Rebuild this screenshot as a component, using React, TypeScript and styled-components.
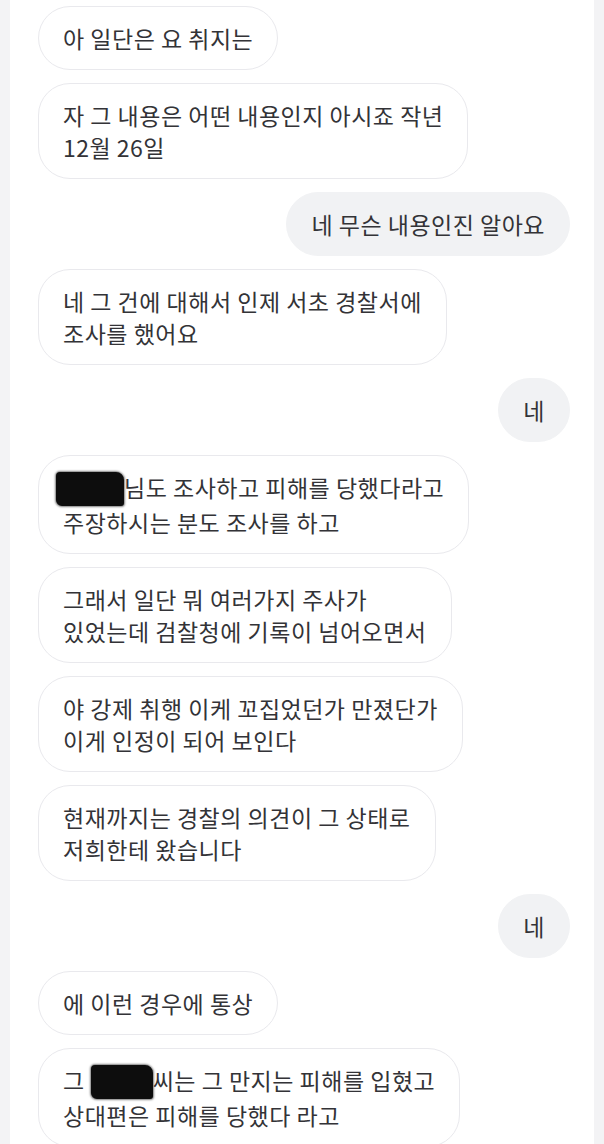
import React from 'react'
import styled, { createGlobalStyle } from 'styled-components'

type Message = {
  mine?: boolean
  lines: React.ReactNode[]
}

function Redacted({ width, shift = 0 }: { width: number; shift?: number }) {
  return <Blot style={{ width, marginLeft: shift }} />
}

const messages: Message[] = [
  { lines: ['아 일단은 요 취지는'] },
  { lines: ['자 그 내용은 어떤 내용인지 아시죠 작년', '12월 26일'] },
  { mine: true, lines: ['네 무슨 내용인진 알아요'] },
  { lines: ['네 그 건에 대해서 인제 서초 경찰서에', '조사를 했어요'] },
  { mine: true, lines: ['네'] },
  {
    lines: [
      <>
        <Redacted width={68} shift={-7} />
        님도 조사하고 피해를 당했다라고
      </>,
      '주장하시는 분도 조사를 하고',
    ],
  },
  { lines: ['그래서 일단 뭐 여러가지 주사가', '있었는데 검찰청에 기록이 넘어오면서'] },
  { lines: ['야 강제 취행 이케 꼬집었던가 만졌단가', '이게 인정이 되어 보인다'] },
  { lines: ['현재까지는 경찰의 의견이 그 상태로', '저희한테 왔습니다'] },
  { mine: true, lines: ['네'] },
  { lines: ['에 이런 경우에 통상'] },
  {
    lines: [
      <>
        그
        <Redacted width={62} shift={6} />
        씨는 그 만지는 피해를 입혔고
      </>,
      '상대편은 피해를 당했다 라고',
    ],
  },
]

export default function App() {
  return (
    <>
      <GlobalStyle />
      <Transcript>
        {messages.map((m, i) => (
          <Bubble key={i} $mine={!!m.mine}>
            {m.lines.map((line, j) => (
              <Line key={j}>{line}</Line>
            ))}
          </Bubble>
        ))}
      </Transcript>
    </>
  )
}

// styles

const GlobalStyle = createGlobalStyle`
  html, body {
    margin: 0;
    padding: 0;
    background: #f3f3f5;
  }
  body {
    font-family: "Noto Sans CJK KR", "Noto Sans", sans-serif;
    color: #333337;
  }
`

const Transcript = styled.main`
  display: flex;
  flex-direction: column;
  gap: 13px;
  margin: 0 10px;
  padding: 6px 24px 0 28px;
  min-height: 100vh;
  box-sizing: border-box;
  background: #ffffff;
`

const Bubble = styled.div<{ $mine: boolean }>`
  align-self: ${(p) => (p.$mine ? 'flex-end' : 'flex-start')};
  display: flex;
  flex-direction: column;
  padding: 15px 24px;
  border-radius: 32px;
  border: 1px solid ${(p) => (p.$mine ? '#f1f2f4' : '#e9e9ed')};
  background: ${(p) => (p.$mine ? '#f1f2f4' : '#ffffff')};
  font-size: 23px;
  letter-spacing: 0.5px;
  line-height: 32px;
  white-space: nowrap;
`

const Line = styled.span`
  display: block;
`

const Blot = styled.span`
  display: inline-block;
  height: 34px;
  vertical-align: -9px;
  background: #0d0d0d;
  border-radius: 4px 8px 3px 6px;
  box-shadow: 0 0 2px 1px rgba(0, 0, 0, 0.5);
`
